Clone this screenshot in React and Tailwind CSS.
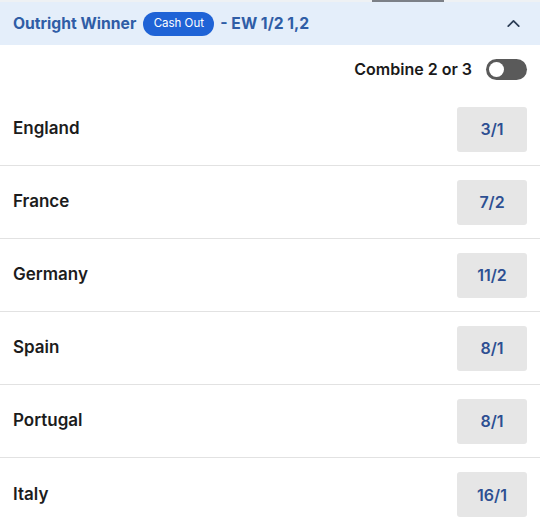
import { ChevronUp } from 'lucide-react'

const runners = [
  { name: 'England', odds: '3/1' },
  { name: 'France', odds: '7/2' },
  { name: 'Germany', odds: '11/2' },
  { name: 'Spain', odds: '8/1' },
  { name: 'Portugal', odds: '8/1' },
  { name: 'Italy', odds: '16/1' },
]

function Toggle() {
  return (
    <div className="w-[41px] h-[21px] rounded-full bg-[#5a5a5a] flex items-center px-[3px]">
      <div className="w-[15px] h-[15px] rounded-full bg-white" />
    </div>
  )
}

export default function App() {
  return (
    <div className="w-[540px] h-[521px] overflow-hidden bg-white" style={{ fontFamily: 'Inter, "Noto Sans", sans-serif' }}>
      <div className="relative h-[2px] bg-[#eef1f4]">
        <div className="absolute left-[372px] top-0 w-[72px] h-[2px] bg-[#7c8087]" />
      </div>
      <div className="h-[43px] bg-[#e4eefa] flex items-center pl-[13px] pr-[16px]">
        <span className="text-[15.7px] font-bold text-[#2f5da6]">Outright Winner</span>
        <span className="ml-[7px] h-[24px] w-[71px] rounded-full bg-[#1f63d6] text-white text-[11.5px] flex items-center justify-center">
          Cash Out
        </span>
        <span className="ml-[6px] text-[15.7px] font-bold text-[#2f5da6]">- EW 1/2 1,2</span>
        <ChevronUp className="ml-auto w-[21px] h-[21px] text-[#2b3d55]" strokeWidth={2} />
      </div>
      <div className="h-[48px] flex items-center justify-end pr-[13px] gap-[14px]">
        <span className="text-[16px] font-semibold text-[#1a1a1a]">Combine 2 or 3</span>
        <Toggle />
      </div>
      {runners.map((r, i) => (
        <div
          key={r.name}
          className={`h-[73px] flex items-center justify-between pl-[13px] pr-[13px] ${i < runners.length - 1 ? 'border-b border-[#e2e2e2]' : ''}`}
        >
          <span className="text-[17px] font-semibold text-[#1c1c1c]">{r.name}</span>
          <div className="w-[70px] h-[45px] rounded-[3px] bg-[#e6e6e6] flex items-center justify-center text-[16px] font-semibold text-[#2d4f92]">
            {r.odds}
          </div>
        </div>
      ))}
    </div>
  )
}
